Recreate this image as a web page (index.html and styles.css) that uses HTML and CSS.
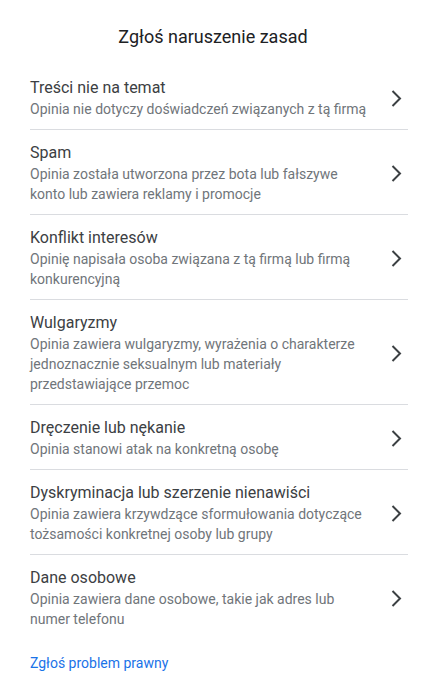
FILE: index.html
```html
<!DOCTYPE html>
<html lang="pl">
<head>
    <meta charset="UTF-8">
    <title>Zgłoś naruszenie zasad</title>
    <link rel="stylesheet" href="styles.css">
</head>
<body>
    <h1 class="ttl">Zgłoś naruszenie zasad</h1>
    <div class="list">
        <div class="item">
            <div class="txt">
                <p class="name">Treści nie na temat</p>
                <p class="desc">Opinia nie dotyczy doświadczeń związanych z tą firmą</p>
            </div>
            <svg class="chev" viewBox="0 0 24 24"><path d="M8.5 5 16 12.5 8.5 20"/></svg>
        </div>
        <div class="item">
            <div class="txt">
                <p class="name">Spam</p>
                <p class="desc">Opinia została utworzona przez bota lub fałszywe konto lub zawiera reklamy i promocje</p>
            </div>
            <svg class="chev" viewBox="0 0 24 24"><path d="M8.5 5 16 12.5 8.5 20"/></svg>
        </div>
        <div class="item">
            <div class="txt">
                <p class="name">Konflikt interesów</p>
                <p class="desc">Opinię napisała osoba związana z tą firmą lub firmą konkurencyjną</p>
            </div>
            <svg class="chev" viewBox="0 0 24 24"><path d="M8.5 5 16 12.5 8.5 20"/></svg>
        </div>
        <div class="item">
            <div class="txt">
                <p class="name">Wulgaryzmy</p>
                <p class="desc">Opinia zawiera wulgaryzmy, wyrażenia o charakterze jednoznacznie seksualnym lub materiały przedstawiające przemoc</p>
            </div>
            <svg class="chev" viewBox="0 0 24 24"><path d="M8.5 5 16 12.5 8.5 20"/></svg>
        </div>
        <div class="item">
            <div class="txt">
                <p class="name">Dręczenie lub nękanie</p>
                <p class="desc">Opinia stanowi atak na konkretną osobę</p>
            </div>
            <svg class="chev" viewBox="0 0 24 24"><path d="M8.5 5 16 12.5 8.5 20"/></svg>
        </div>
        <div class="item">
            <div class="txt">
                <p class="name">Dyskryminacja lub szerzenie nienawiści</p>
                <p class="desc">Opinia zawiera krzywdzące sformułowania dotyczące tożsamości konkretnej osoby lub grupy</p>
            </div>
            <svg class="chev" viewBox="0 0 24 24"><path d="M8.5 5 16 12.5 8.5 20"/></svg>
        </div>
        <div class="item last">
            <div class="txt">
                <p class="name">Dane osobowe</p>
                <p class="desc">Opinia zawiera dane osobowe, takie jak adres lub numer telefonu</p>
            </div>
            <svg class="chev" viewBox="0 0 24 24"><path d="M8.5 5 16 12.5 8.5 20"/></svg>
        </div>
    </div>
    <a class="link" href="#">Zgłoś problem prawny</a>
</body>
</html>
```

FILE: styles.css
```css
body {
    margin: 0;
    padding: 0 18px 0 30px;
    font-family: Roboto, "Liberation Sans", sans-serif;
    background: #fff;
}

.ttl {
    margin: 0 -18px 0 -30px;
    padding: 26px 0 0;
    font-size: 18px;
    font-weight: 400;
    line-height: 22px;
    color: #202124;
    text-align: center;
}

.list {
    margin-top: 17px;
}

.item {
    display: flex;
    align-items: center;
    gap: 12px;
    padding: 12px 0 10px;
    border-bottom: 1px solid #dadce0;
}

.item.last {
    border-bottom: 0;
}

.txt {
    flex: 1;
}

.name {
    margin: 0;
    font-size: 16px;
    line-height: 22px;
    color: #3c4043;
}

.desc {
    margin: 0;
    font-size: 14px;
    line-height: 20px;
    color: #70757a;
}

.chev {
    width: 24px;
    height: 24px;
    flex: none;
    fill: none;
    stroke: #3c4043;
    stroke-width: 2;
}

.link {
    display: inline-block;
    margin-top: 14px;
    font-size: 14px;
    line-height: 20px;
    color: #1a73e8;
    text-decoration: none;
}
```
